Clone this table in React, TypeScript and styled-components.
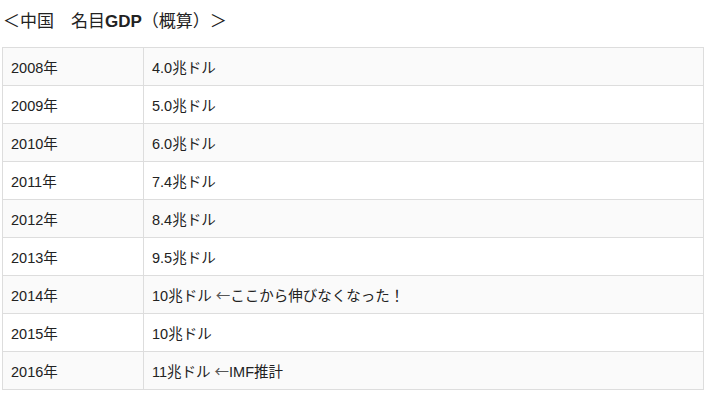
import styled, { createGlobalStyle } from "styled-components";

const GlobalStyle = createGlobalStyle`
    body {
        margin: 0;
        background: #ffffff;
        font-family: "Liberation Sans", Arial, "Noto Sans CJK JP", sans-serif;
        color: #333333;
    }
`

const Page = styled.div`
    padding: 10px 12px 0 2px;
`

const Title = styled.h3`
    margin: 0 0 14px 1px;
    font-size: 17px;
    font-weight: normal;
    line-height: 23px;
    color: #222222;

    b {
        font-weight: bold;
    }
`

const Table = styled.table`
    width: 702px;
    border-collapse: collapse;
    font-size: 14.5px;
`

const Row = styled.tr<{ $odd: boolean }>`
    background-color: ${(p) => (p.$odd ? "#fafafa" : "#ffffff")};
`

const Cell = styled.td<{ $first?: boolean }>`
    border: 1px solid #dddddd;
    height: 38px;
    padding: 0 8px;
    box-sizing: border-box;
    width: ${(p) => (p.$first ? "141px" : "auto")};
    color: #222222;
    vertical-align: middle;
`

const Arrow = styled.span`
    font-family: "Noto Sans CJK JP", sans-serif;
    color: #555555;
    margin-left: 4px;
`

const rows: [string, string, string?][] = [
    ["2008年", "4.0兆ドル"],
    ["2009年", "5.0兆ドル"],
    ["2010年", "6.0兆ドル"],
    ["2011年", "7.4兆ドル"],
    ["2012年", "8.4兆ドル"],
    ["2013年", "9.5兆ドル"],
    ["2014年", "10兆ドル", "ここから伸びなくなった！"],
    ["2015年", "10兆ドル"],
    ["2016年", "11兆ドル", "IMF推計"],
]

export default function App() {
    return (
        <Page>
            <GlobalStyle />
            <Title>＜中国　名目<b>GDP</b>（概算）＞</Title>
            <Table>
                <tbody>
                    {rows.map(([year, value, note], i) => (
                        <Row key={year} $odd={i % 2 === 0}>
                            <Cell $first>{year}</Cell>
                            <Cell>
                                {value}
                                {note && (
                                    <>
                                        <Arrow>←</Arrow>
                                        {note}
                                    </>
                                )}
                            </Cell>
                        </Row>
                    ))}
                </tbody>
            </Table>
        </Page>
    );
}
